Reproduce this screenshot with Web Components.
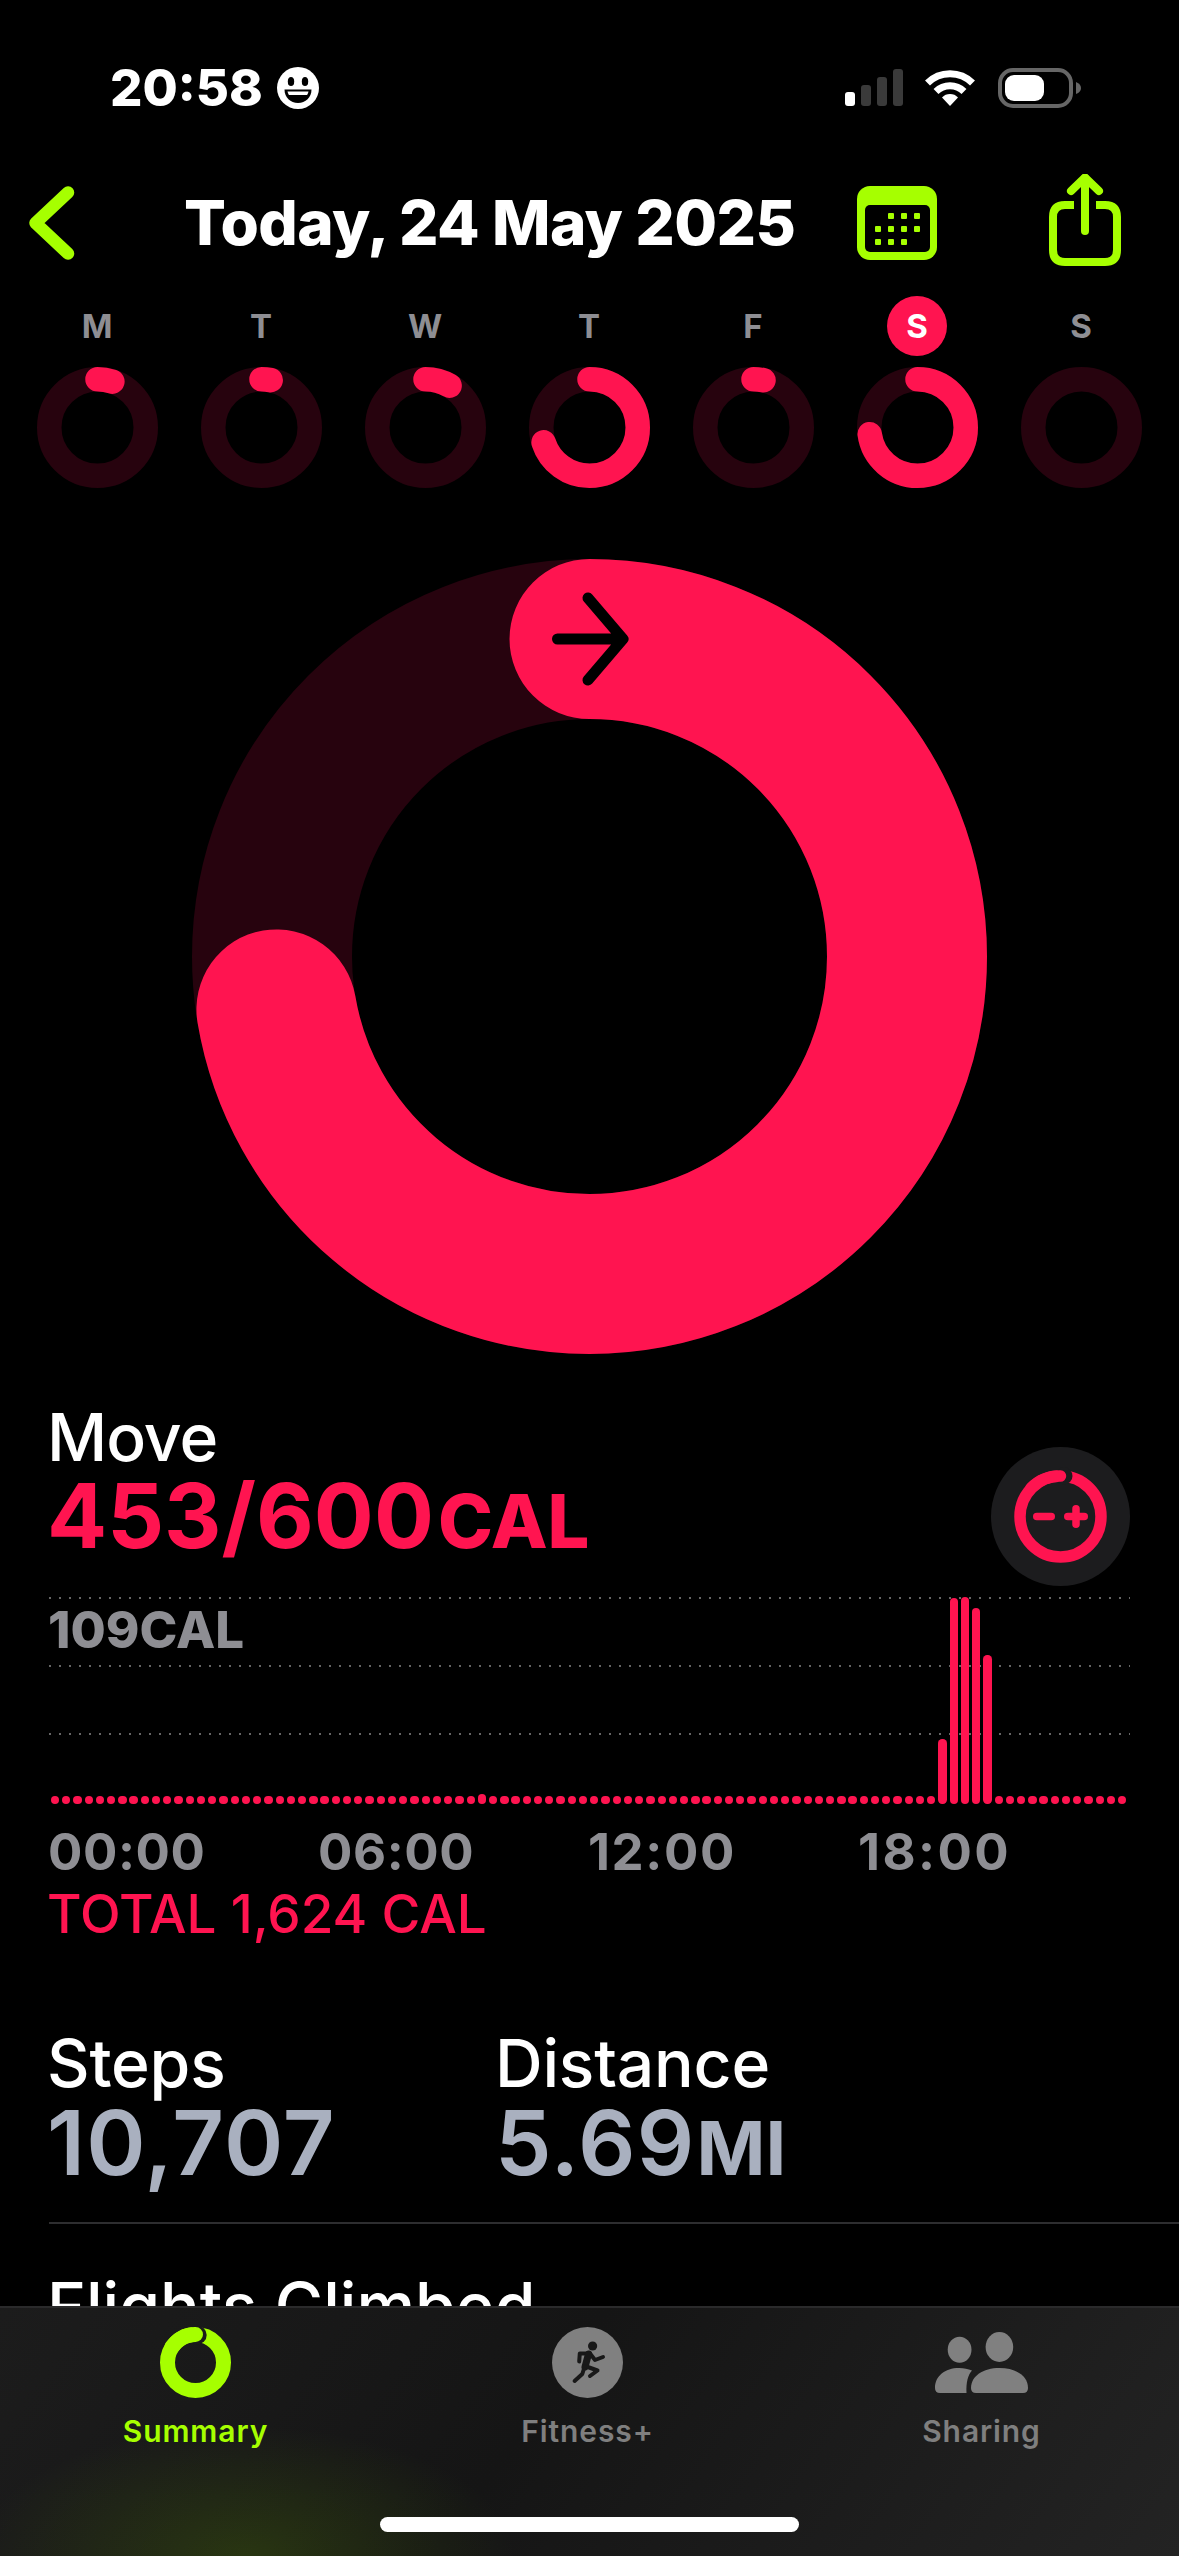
<!DOCTYPE html>
<html lang="en">
<head>
<meta charset="utf-8">
<title>Activity</title>
<style>
    html, body { margin: 0; background: #000; }
    body { font-family: Inter, "Liberation Sans", sans-serif; color: #fff; }
</style>
</head>
<body>
<app-screen>
    <status-bar></status-bar>
    <nav-header>Today, 24 May 2025</nav-header>
    <week-strip></week-strip>
    <activity-ring size="795" width="160" angle="260.4" arrow></activity-ring>
    <move-card></move-card>
    <stat-row>
        <stat-block label="Steps">10,707</stat-block>
        <stat-block label="Distance" unit="MI">5.69</stat-block>
    </stat-row>
    <more-row>Flights Climbed</more-row>
    <tab-bar slot="tabs"></tab-bar>
</app-screen>

<script>
// Colours used by more than one element
const PINK = '#ff1450';
const LIME = '#a6ff00';

// Page frame: scrolling content is cut off where the tab bar starts
class AppScreen extends HTMLElement {
    constructor() {
        super();
        this.attachShadow({ mode: 'open' });
        this.shadowRoot.innerHTML = `
            <style>
                :host { display: flex; flex-direction: column; width: 1179px; height: 2556px; overflow: hidden; }
                main { height: 2306px; overflow: hidden; }
            </style>
            <main><slot></slot></main>
            <slot name="tabs"></slot>
        `;
    }
}

class StatusBar extends HTMLElement {
    constructor() {
        super();
        this.attachShadow({ mode: 'open' });
        this.shadowRoot.innerHTML = `
            <style>
                :host { display: flex; height: 170px; box-sizing: border-box; padding: 60px 98px 54px 110px; align-items: center; }
                .time { font: 800 51px/56px Inter, sans-serif; color: #fff; }
                .face { margin-left: 14px; }
                .right { margin-left: auto; display: flex; align-items: center; }
                .wifi { margin-left: 22px; }
                .battery { margin-left: 23px; }
            </style>
            <span class="time">20:58</span>
            <svg class="face" width="42" height="42" viewBox="0 0 42 42">
                <circle cx="21" cy="21" r="21" fill="#fff"/>
                <ellipse cx="14" cy="14.5" rx="3.2" ry="4.6" fill="#000"/>
                <ellipse cx="28" cy="14.5" rx="3.2" ry="4.6" fill="#000"/>
                <path d="M7.5 22.5 H34.5 C34.5 30.5 28.5 36 21 36 C13.5 36 7.5 30.5 7.5 22.5Z" fill="#000"/>
                <path d="M10.5 24.5 H31.5 C31 26.5 30.5 27.5 30 28 H12 C11.5 27.5 11 26.5 10.5 24.5Z" fill="#fff"/>
            </svg>
            <div class="right">
                <svg width="58" height="38" viewBox="0 0 58 38">
                    <rect x="0" y="23" width="10" height="14" rx="3" fill="#fff"/>
                    <rect x="16" y="16" width="10" height="21" rx="3" fill="#3a3a3a"/>
                    <rect x="32" y="8" width="10" height="29" rx="3" fill="#3a3a3a"/>
                    <rect x="48" y="0" width="10" height="37" rx="3" fill="#3a3a3a"/>
                </svg>
                <svg class="wifi" width="50" height="38" viewBox="0 0 50 38">
                    <path d="M2.5 14 A32 32 0 0 1 47.5 14" fill="none" stroke="#fff" stroke-width="7"/>
                    <path d="M11 22.5 A20 20 0 0 1 39 22.5" fill="none" stroke="#fff" stroke-width="7"/>
                    <path d="M25 37 L17 28.5 A11 11 0 0 1 33 28.5Z" fill="#fff"/>
                </svg>
                <svg class="battery" width="83" height="40" viewBox="0 0 83 40">
                    <rect x="2" y="2" width="71" height="36" rx="13" fill="none" stroke="#666" stroke-width="4"/>
                    <rect x="7" y="7" width="39" height="26" rx="9" fill="#fff"/>
                    <path d="M78 14 Q83 16 83 20 Q83 24 78 26Z" fill="#666"/>
                </svg>
            </div>
        `;
    }
}

class NavHeader extends HTMLElement {
    constructor() {
        super();
        this.attachShadow({ mode: 'open' });
        this.shadowRoot.innerHTML = `
            <style>
                :host { display: grid; grid-template-columns: 155px 673px 192px 72px; height: 106px; padding-left: 29px; align-items: center; }
                .title { font: 800 62px/72px Inter, sans-serif; color: #fff; letter-spacing: -0.6px; white-space: nowrap; }
                .share { margin-top: -6px; }
            </style>
            <svg width="46" height="74" viewBox="0 0 46 74">
                <path d="M39 6.5 L6.5 37 L39 67.5" fill="none" stroke="${LIME}" stroke-width="12.5" stroke-linecap="round" stroke-linejoin="round"/>
            </svg>
            <span class="title"><slot></slot></span>
            <svg width="80" height="74" viewBox="0 0 80 74">
                <rect width="80" height="74" rx="13" fill="${LIME}"/>
                <rect x="8" y="19" width="65" height="47" rx="5" fill="#000"/>
                <g fill="${LIME}">
                    <rect x="31" y="27" width="6" height="6" rx="1"/><rect x="44" y="27" width="6" height="6" rx="1"/><rect x="57" y="27" width="6" height="6" rx="1"/>
                    <rect x="18" y="40" width="6" height="6" rx="1"/><rect x="31" y="40" width="6" height="6" rx="1"/><rect x="44" y="40" width="6" height="6" rx="1"/><rect x="57" y="40" width="6" height="6" rx="1"/>
                    <rect x="18" y="53" width="6" height="6" rx="1"/><rect x="31" y="53" width="6" height="6" rx="1"/><rect x="44" y="53" width="6" height="6" rx="1"/>
                </g>
            </svg>
            <svg class="share" width="72" height="92" viewBox="0 0 72 92">
                <g fill="none" stroke="${LIME}" stroke-width="8" stroke-linecap="round" stroke-linejoin="round">
                    <path d="M25 31 H16 Q4 31 4 43 V76 Q4 88 16 88 H56 Q68 88 68 76 V43 Q68 31 56 31 H47" stroke-linecap="butt"/>
                    <path d="M36 57 V4"/>
                    <path d="M22 17 L36 3.5 L50 17"/>
                </g>
            </svg>
        `;
    }
}

// Single progress ring. angle is degrees clockwise from the top.
class ActivityRing extends HTMLElement {
    constructor() {
        super();
        this.attachShadow({ mode: 'open' });
        const size = Number(this.getAttribute('size'));
        const width = Number(this.getAttribute('width'));
        const angle = Number(this.getAttribute('angle') || 0);
        const c = size / 2;
        const r = c - width / 2;
        const progress = angle > 0 ? `<circle cx="${c}" cy="${c}" r="${r}" fill="none" stroke="${PINK}" stroke-width="${width}"
            stroke-linecap="round" pathLength="360" stroke-dasharray="${angle} 720" transform="rotate(-90 ${c} ${c})"/>` : '';
        const arrow = this.hasAttribute('arrow') ? `<path d="M${c - 32} ${width / 2} H${c + 33} M${c - 1.5} ${width / 2 - 41} L${c + 33.5} ${width / 2} L${c - 1.5} ${width / 2 + 41}"
            fill="none" stroke="#000" stroke-width="11" stroke-linecap="round" stroke-linejoin="round"/>` : '';
        this.shadowRoot.innerHTML = `
            <style>
                :host { display: block; width: ${size}px; height: ${size}px; }
                :host([arrow]) { margin: 71px 0 0 192px; }
                svg { display: block; }
            </style>
            <svg width="${size}" height="${size}" viewBox="0 0 ${size} ${size}">
                <circle cx="${c}" cy="${c}" r="${r}" fill="none" stroke="#27030e" stroke-width="${width}"/>
                ${progress}
                ${arrow}
            </svg>
        `;
    }
}

class DayRing extends HTMLElement {
    constructor() {
        super();
        this.attachShadow({ mode: 'open' });
        const today = this.hasAttribute('today');
        this.shadowRoot.innerHTML = `
            <style>
                :host { display: flex; flex-direction: column; align-items: center; gap: 11px; }
                .label { width: 60px; height: 60px; border-radius: 50%; display: flex; align-items: center; justify-content: center;
                    font: 700 33px/1 Inter, sans-serif; color: ${today ? '#fff' : '#8e8e93'}; background: ${today ? PINK : 'transparent'}; }
            </style>
            <div class="label"><slot></slot></div>
            <activity-ring size="121" width="24.5" angle="${this.getAttribute('angle') || 0}"></activity-ring>
        `;
    }
}

class WeekStrip extends HTMLElement {
    constructor() {
        super();
        this.attachShadow({ mode: 'open' });
        const days = [['M', 18], ['T', 11], ['W', 30], ['T', 252], ['F', 12], ['S', 262, true], ['S', 0]];
        this.shadowRoot.innerHTML = `
            <style>
                :host { display: grid; grid-template-columns: repeat(7, 164px); margin-top: 20px; padding-left: 15px; }
            </style>
            ${days.map(d => `<day-ring angle="${d[1]}" ${d[2] ? 'today' : ''}>${d[0]}</day-ring>`).join('')}
        `;
    }
}

class RingButton extends HTMLElement {
    constructor() {
        super();
        this.attachShadow({ mode: 'open' });
        this.shadowRoot.innerHTML = `
            <style>
                :host { display: block; width: 139px; height: 139px; }
                svg { display: block; }
            </style>
            <svg width="139" height="139" viewBox="0 0 139 139">
                <circle cx="69.5" cy="69.5" r="69.5" fill="#1c1c1e"/>
                <circle cx="69.5" cy="69.5" r="40.5" fill="none" stroke="${PINK}" stroke-width="11.5"/>
                <circle cx="73" cy="29" r="8.5" fill="#1c1c1e"/>
                <path d="M69.5 29 A40.5 40.5 0 0 0 40 41" fill="none" stroke="${PINK}" stroke-width="11.5" stroke-linecap="round"/>
                <path d="M45.75 69.5 H60.25 M76.75 69.5 H93.25 M85 61.75 V77.25" fill="none" stroke="${PINK}" stroke-width="7.5" stroke-linecap="round"/>
            </svg>
        `;
    }
}

// Quarter-hour bars with the dotted scale behind them
class CalorieChart extends HTMLElement {
    constructor() {
        super();
        this.attachShadow({ mode: 'open' });
        const tall = { 38: 10, 79: 65, 80: 206, 81: 207, 82: 196, 83: 149 };
        let bars = '';
        for (let i = 0; i < 96; i++) {
            bars += `<i style="height:${tall[i] || 8.3}px"></i>`;
        }
        this.shadowRoot.innerHTML = `
            <style>
                :host { display: grid; height: 207px; width: 1081px; }
                .scale, .bars, .peak { grid-area: 1 / 1; }
                .scale { display: flex; flex-direction: column; gap: 66px; }
                .scale b { display: block; height: 2px; background: repeating-linear-gradient(90deg, #666 0 2px, transparent 2px 10px); }
                .peak { font: 800 51px/56px Inter, sans-serif; color: #8e8e93; margin: 5px 0 0 -1px; }
                .bars { display: flex; align-items: flex-end; gap: 2.95px; padding-left: 1.85px; }
                .bars i { display: block; flex: none; width: 8.3px; border-radius: 4.15px; background: ${PINK}; }
            </style>
            <div class="scale"><b></b><b></b><b></b></div>
            <div class="peak">109CAL</div>
            <div class="bars">${bars}</div>
        `;
    }
}

class MoveCard extends HTMLElement {
    constructor() {
        super();
        this.attachShadow({ mode: 'open' });
        this.shadowRoot.innerHTML = `
            <style>
                :host { display: block; margin-top: 51px; padding-left: 49px; font-family: Inter, sans-serif; }
                .top { display: flex; width: 1081px; justify-content: space-between; align-items: flex-start; }
                ring-button { margin-top: 42px; }
                .label { font: 500 66px/64px Inter, sans-serif; color: #fff; margin-left: -2px; letter-spacing: -1px; }
                .value { font: 700 89px/94px Inter, sans-serif; color: ${PINK}; margin-left: -2px; white-space: nowrap; }
                .value span { font-size: 74px; font-weight: 800; margin-left: 4px; }
                calorie-chart { margin-top: 11px; }
                .hours { display: grid; grid-template-columns: repeat(4, 270px); margin: 20px 0 0 -1px; font: 700 51px/56px Inter, sans-serif; color: #8e8e93; letter-spacing: 0.6px; }
                .total { font: 500 53px/56px Inter, sans-serif; color: ${PINK}; margin: 6px 0 0 -2px; }
            </style>
            <div class="top">
                <div>
                    <div class="label">Move</div>
                    <div class="value">453/600<span>CAL</span></div>
                </div>
                <ring-button></ring-button>
            </div>
            <calorie-chart></calorie-chart>
            <div class="hours"><span>00:00</span><span>06:00</span><span style="letter-spacing:1.6px">12:00</span><span style="letter-spacing:2.4px">18:00</span></div>
            <div class="total">TOTAL 1,624 CAL</div>
        `;
    }
}

class StatBlock extends HTMLElement {
    constructor() {
        super();
        this.attachShadow({ mode: 'open' });
        const unit = this.getAttribute('unit');
        this.shadowRoot.innerHTML = `
            <style>
                :host { display: block; margin-left: -3px; }
                .label { font: 500 66px/64px Inter, sans-serif; color: #fff; letter-spacing: -0.2px; }
                .value { font: 600 90px/94px Inter, sans-serif; color: #a9b0bf; margin-top: 1px; white-space: nowrap; letter-spacing: 1.2px; }
                .value span { font-size: 74px; font-weight: 700; margin-left: 1px; letter-spacing: 0; }
            </style>
            <div class="label">${this.getAttribute('label')}</div>
            <div class="value"><slot></slot>${unit ? `<span>${unit}</span>` : ''}</div>
        `;
    }
}

class StatRow extends HTMLElement {
    constructor() {
        super();
        this.attachShadow({ mode: 'open' });
        this.shadowRoot.innerHTML = `
            <style>
                :host { display: grid; grid-template-columns: 448px 1fr; margin: 88px 0 0 49px; padding: 1px 0 27px 1px; border-bottom: 2px solid #2e2e30; }
            </style>
            <slot></slot>
        `;
    }
}

class MoreRow extends HTMLElement {
    constructor() {
        super();
        this.attachShadow({ mode: 'open' });
        this.shadowRoot.innerHTML = `
            <style>
                :host { display: block; margin: 50px 0 0 47px; font: 500 66px/64px Inter, sans-serif; color: #fff; }
            </style>
            <slot></slot>
        `;
    }
}

class TabItem extends HTMLElement {
    constructor() {
        super();
        this.attachShadow({ mode: 'open' });
        this.shadowRoot.innerHTML = `
            <style>
                :host { display: flex; flex-direction: column; align-items: center; color: #7f7f7f; }
                :host([active]) { color: ${LIME}; }
                .icon { height: 71px; display: flex; align-items: center; }
                .name { margin-top: 15px; font: 600 30px/36px Inter, sans-serif; letter-spacing: 0.9px; }
            </style>
            <div class="icon"><slot name="icon"></slot></div>
            <div class="name"><slot></slot></div>
        `;
    }
}

class TabBar extends HTMLElement {
    constructor() {
        super();
        this.attachShadow({ mode: 'open' });
        this.shadowRoot.innerHTML = `
            <style>
                :host { display: block; height: 250px; box-sizing: border-box; border-top: 2px solid #2a2a2b; padding-top: 19px;
                    background: radial-gradient(ellipse 270px 130px at 245px 100%, rgba(96, 150, 0, 0.24), rgba(96, 150, 0, 0) 100%),
                        linear-gradient(125deg, #1c1c1c 0%, #151515 45%, #232323 100%); }
                .tabs { display: grid; grid-template-columns: 391px 393px 395px; }
                .home { width: 419px; height: 15px; border-radius: 8px; background: #fff; margin: 68px 0 0 380px; }
                svg { display: block; }
            </style>
            <div class="tabs">
                <tab-item active>
                    <svg slot="icon" width="71" height="71" viewBox="0 0 71 71">
                        <circle cx="35.5" cy="35.5" r="28" fill="none" stroke="${LIME}" stroke-width="15"/>
                        <circle cx="37.5" cy="8" r="9.2" fill="#1b1b1b"/>
                        <path d="M35.5 7.5 A28 28 0 0 0 12 20" fill="none" stroke="${LIME}" stroke-width="15" stroke-linecap="round"/>
                    </svg>
                    Summary
                </tab-item>
                <tab-item>
                    <svg slot="icon" width="71" height="71" viewBox="0 0 71 71">
                        <circle cx="35.5" cy="35.5" r="35.5" fill="#808080"/>
                        <circle cx="40.6" cy="19" r="4.6" fill="#181818"/>
                        <g fill="none" stroke="#181818" stroke-width="4" stroke-linecap="round" stroke-linejoin="round">
                            <path d="M27.2 34.5 L27.8 26.5 H38 L43 33 L51 30"/>
                            <path d="M36.5 27 L33 40" stroke-width="7"/>
                            <path d="M33 39 L45.5 43.5 L38 49"/>
                            <path d="M32.5 40 L30.3 47 L22.6 54"/>
                        </g>
                    </svg>
                    Fitness+
                </tab-item>
                <tab-item>
                    <svg slot="icon" width="93" height="61" viewBox="0 0 93 61">
                        <g fill="#808080">
                            <ellipse cx="24.6" cy="17.7" rx="11.9" ry="13"/>
                            <ellipse cx="64.4" cy="15" rx="13.8" ry="15"/>
                            <path d="M36 56 C36 44 48 36 64.5 36 C81 36 93 44 93 56 Q93 61 88 61 H41 Q36 61 36 56Z"/>
                            <path d="M0 56 C0 44 10 36 24 36 C29 36 33 37 37 38.5 C33 43 31 50 31.5 61 H5 Q0 61 0 56Z"/>
                        </g>
                    </svg>
                    Sharing
                </tab-item>
            </div>
            <div class="home"></div>
        `;
    }
}

window.customElements.define('app-screen', AppScreen);
window.customElements.define('status-bar', StatusBar);
window.customElements.define('nav-header', NavHeader);
window.customElements.define('activity-ring', ActivityRing);
window.customElements.define('day-ring', DayRing);
window.customElements.define('week-strip', WeekStrip);
window.customElements.define('ring-button', RingButton);
window.customElements.define('calorie-chart', CalorieChart);
window.customElements.define('move-card', MoveCard);
window.customElements.define('stat-block', StatBlock);
window.customElements.define('stat-row', StatRow);
window.customElements.define('more-row', MoreRow);
window.customElements.define('tab-item', TabItem);
window.customElements.define('tab-bar', TabBar);
</script>
</body>
</html>
